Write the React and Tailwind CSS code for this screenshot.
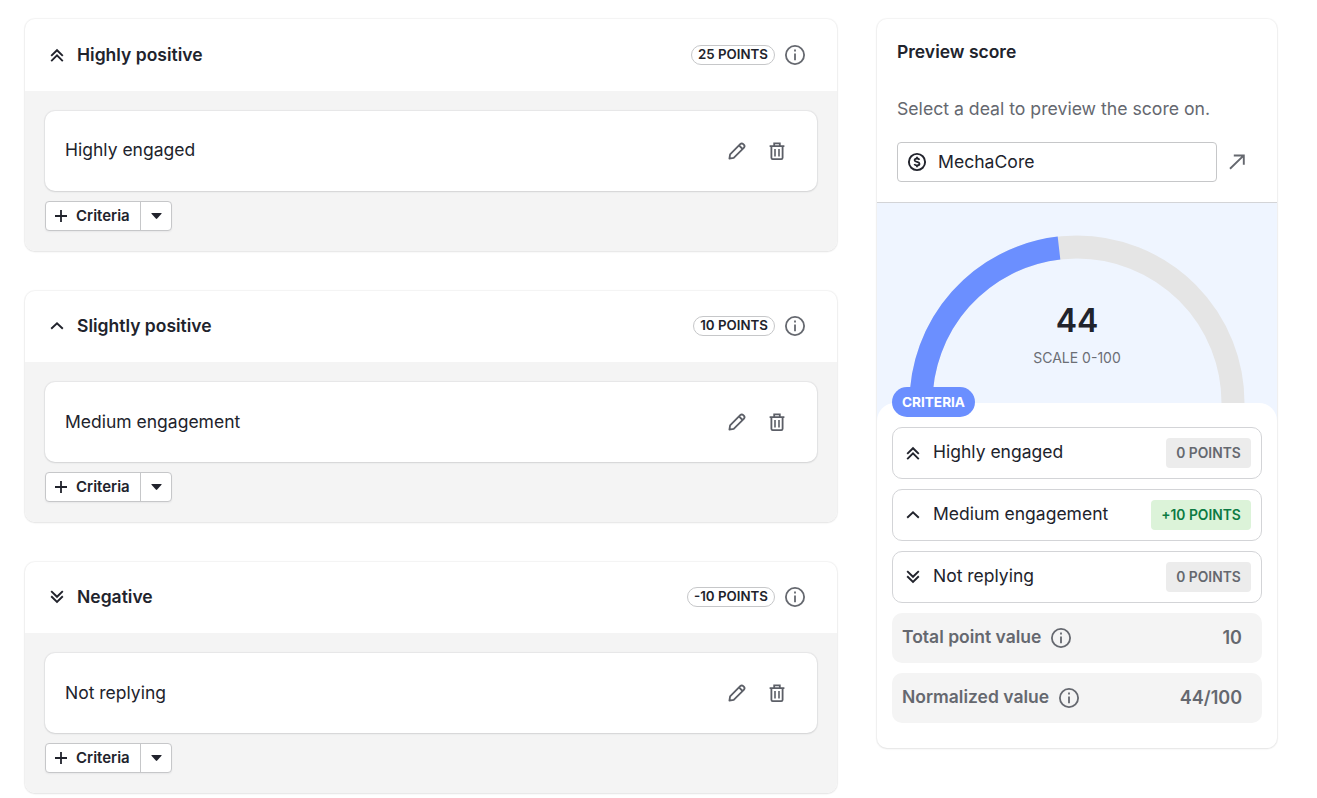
const GROUPS = [
    { level: 'high', title: 'Highly positive', points: '25 POINTS', criterion: 'Highly engaged', header: 'h-[72px]', text: 'pb-px' },
    { level: 'slight', title: 'Slightly positive', points: '10 POINTS', criterion: 'Medium engagement', header: 'h-[71px] pb-px', text: 'pb-0' },
    { level: 'negative', title: 'Negative', points: '-10 POINTS', criterion: 'Not replying', header: 'h-[71px] pb-px', text: 'pb-0' },
];

const RESULTS = [
    { level: 'high', label: 'Highly engaged', points: '0 POINTS' },
    { level: 'slight', label: 'Medium engagement', points: '+10 POINTS', active: true },
    { level: 'negative', label: 'Not replying', points: '0 POINTS' },
];

const LEVEL_PATHS = {
    high: 'M4.2 10.9 10 5.2l5.8 5.7M4.2 16.1 10 10.4l5.8 5.7',
    slight: 'M4.2 12.8 10 7.3l5.8 5.5',
    negative: 'M4.2 4.1 10 9.8l5.8-5.7M4.2 9.3l5.8 5.7 5.8-5.7',
};

function LevelIcon({ level }) {
    return (
        <svg className="h-5 w-5 shrink-0" viewBox="0 0 20 20" fill="none" stroke="currentColor" strokeWidth="1.9">
            <path d={LEVEL_PATHS[level]} />
        </svg>
    );
}

function InfoIcon() {
    return (
        <svg className="h-5 w-5 shrink-0 text-[#65686f]" viewBox="0 0 20 20" fill="none" stroke="currentColor">
            <circle cx="10" cy="10" r="9.1" strokeWidth="1.8" />
            <path d="M10 8.4v6.8M10 4.6v2" strokeWidth="1.8" />
        </svg>
    );
}

function PencilIcon() {
    return (
        <svg className="h-5 w-5" viewBox="0 0 20 20" fill="none" stroke="currentColor" strokeWidth="1.8" strokeLinejoin="round">
            <path d="M2.4 17.6l.7-4.3L13.2 3.2a2.2 2.2 0 0 1 3.1 0l.5.5a2.2 2.2 0 0 1 0 3.1L6.7 16.9z" />
            <path d="M12 4.4l3.6 3.6" />
        </svg>
    );
}

function TrashIcon() {
    return (
        <svg className="h-5 w-5" viewBox="0 0 20 20" fill="none" stroke="currentColor" strokeWidth="1.8">
            <path d="M2.6 5.1h14.8M7.2 4.8V2.4h5.6v2.4M4.4 5.2v11.6a1.3 1.3 0 0 0 1.3 1.3h8.6a1.3 1.3 0 0 0 1.3-1.3V5.2" />
            <path d="M8 8v7.4M12 8v7.4" strokeWidth="1.6" />
        </svg>
    );
}

function DealIcon() {
    return (
        <svg className="h-5 w-5" viewBox="0 0 20 20" fill="none" stroke="currentColor">
            <circle cx="10" cy="10" r="8.1" strokeWidth="1.9" />
            <path
                d="M12.4 7.9c-.3-.9-1.2-1.4-2.4-1.4-1.4 0-2.4.7-2.4 1.7 0 2.3 4.9 1.2 4.9 3.6 0 1-1.1 1.7-2.5 1.7-1.3 0-2.3-.6-2.6-1.5M10 4.8v1.7M10 13.5v1.7"
                strokeWidth="1.8"
            />
        </svg>
    );
}

function AddCriteria() {
    return (
        <div className="flex h-[30px] w-[127px] rounded border border-[#c6c7c9] bg-white text-[15px] font-semibold shadow-[0_1px_2px_rgba(33,35,44,0.06)]">
            <button className="flex w-[94px] items-center pl-[9px]">
                <svg className="h-3 w-3" viewBox="0 0 12 12" fill="none" stroke="currentColor" strokeWidth="1.8">
                    <path d="M6 0v12M0 6h12" />
                </svg>
                <span className="ml-[9px]">Criteria</span>
            </button>
            <button className="flex flex-1 items-center justify-center border-l border-[#c6c7c9]">
                <svg className="h-1.5 w-[11px]" viewBox="0 0 11 6" fill="currentColor">
                    <path d="M.9 0h9.2q.9.1.4.8L6.2 5.6q-.7.6-1.4 0L.5.8Q0 .1.9 0z" />
                </svg>
            </button>
        </div>
    );
}

function ScoreGroup({ group }) {
    return (
        <section className="rounded-[10px] bg-white shadow-[0_0_1px_1px_rgba(33,35,44,0.05),0_1px_2px_rgba(33,35,44,0.08)]">
            <header className={`flex items-center pr-8 pl-[22px] ${group.header}`}>
                <LevelIcon level={group.level} />
                <h2 className="ml-2.5 flex-1 text-[17.5px] font-semibold">{group.title}</h2>
                <span className="flex h-5 items-center rounded-full border border-[#c6c7c9] px-1.5 text-[13.3px] font-semibold">
                    {group.points}
                </span>
                <span className="ml-2.5">
                    <InfoIcon />
                </span>
            </header>
            <div className="h-[160px] rounded-b-[10px] bg-[#f4f4f4] px-5 pt-5">
                <div className="mb-2.5 flex h-20 items-center rounded-[10px] bg-white pr-[30px] pl-5 shadow-[0_0_1px_1px_rgba(33,35,44,0.06),0_1px_2px_rgba(33,35,44,0.1)]">
                    <span className={`flex-1 text-[17.5px] ${group.text}`}>{group.criterion}</span>
                    <div className="flex gap-5 text-[#5c5f67]">
                        <PencilIcon />
                        <TrashIcon />
                    </div>
                </div>
                <AddCriteria />
            </div>
        </section>
    );
}

function Gauge() {
    return (
        <div className="relative h-[220px] border-t border-[#d3d4d7] bg-[#eff5ff]">
            <svg className="block h-[200px] w-[400px]" viewBox="0 0 400 200" fill="none" strokeWidth="23">
                <path d="M44 200a156 156 0 0 1 312 0" stroke="#e5e5e5" />
                <path d="M44 200A156 156 0 0 1 182 45" stroke="#6b8fff" />
            </svg>
            <div className="absolute inset-x-0 top-[98px] text-center">
                <div className="text-[32px] leading-10 font-semibold">44</div>
                <div className="mt-[7px] text-[14px] leading-5 text-[#6b6e75]">SCALE 0-100</div>
            </div>
        </div>
    );
}

function TotalRow({ label, value }) {
    return (
        <div className="flex h-[50px] items-center rounded-[10px] bg-[#f4f4f4] pr-5 pl-2.5 font-semibold text-[#65686f]">
            <span className="pb-px text-[17.5px]">{label}</span>
            <span className="ml-2.5 flex-1">
                <InfoIcon />
            </span>
            <span className="pb-px text-[18px]">{value}</span>
        </div>
    );
}

function PreviewPanel() {
    return (
        <aside className="h-[729px] w-[400px] rounded-[10px] bg-white shadow-[0_0_1px_1px_rgba(33,35,44,0.05),0_1px_2px_rgba(33,35,44,0.08)]">
            <div className="h-[183px] px-5 pt-[21px]">
                <h2 className="text-[17.5px] leading-6 font-semibold">Preview score</h2>
                <p className="mt-[33px] text-[17.65px] leading-6 text-[#65686f]">Select a deal to preview the score on.</p>
                <div className="mt-[21px] flex items-center">
                    <div className="flex h-10 w-80 items-center rounded border border-[#c6c7c9] px-[9px] text-[17.6px]">
                        <DealIcon />
                        <span className="ml-[11px]">MechaCore</span>
                    </div>
                    <svg className="ml-2.5 h-5 w-5 text-[#65686f]" viewBox="0 0 20 20" fill="none" stroke="currentColor" strokeWidth="1.9">
                        <path d="M3 16.8 16.8 3.4M6.8 3.5h10v9.3" />
                    </svg>
                </div>
            </div>
            <Gauge />
            <div className="relative -mt-[19px] rounded-t-[18px] bg-white px-[15px] pt-6">
                <span className="absolute -top-4 left-[15px] flex h-[30px] items-center rounded-full bg-[#6b8fff] px-2.5 text-[13.6px] font-bold text-white">
                    CRITERIA
                </span>
                <div className="space-y-2.5">
                    {RESULTS.map((row) => (
                        <div key={row.label} className="flex h-[52px] items-center rounded-[10px] border border-[#d3d4d7] px-2.5">
                            <LevelIcon level={row.level} />
                            <span className="ml-2.5 flex-1 pb-px text-[17.5px]">{row.label}</span>
                            <span
                                className={`flex h-[30px] items-center justify-center rounded text-[13.8px] font-semibold ${row.active
                                    ? 'w-[100px] bg-[#dcf3d9] text-[#0c7a43]'
                                    : 'w-[85px] bg-[#ececec] text-[#65686f]'
                                    }`}
                            >
                                {row.points}
                            </span>
                        </div>
                    ))}
                    <TotalRow label="Total point value" value="10" />
                    <TotalRow label="Normalized value" value="44/100" />
                </div>
            </div>
        </aside>
    );
}

export default function App() {
    return (
        <div className="flex h-[798px] w-full items-start gap-10 overflow-hidden bg-white pt-[19px] pl-[25px] font-['Inter',sans-serif] text-[#21232c]">
            <main className="flex w-[812px] flex-col gap-10">
                {GROUPS.map((group) => (
                    <ScoreGroup key={group.level} group={group} />
                ))}
            </main>
            <PreviewPanel />
        </div>
    );
}
